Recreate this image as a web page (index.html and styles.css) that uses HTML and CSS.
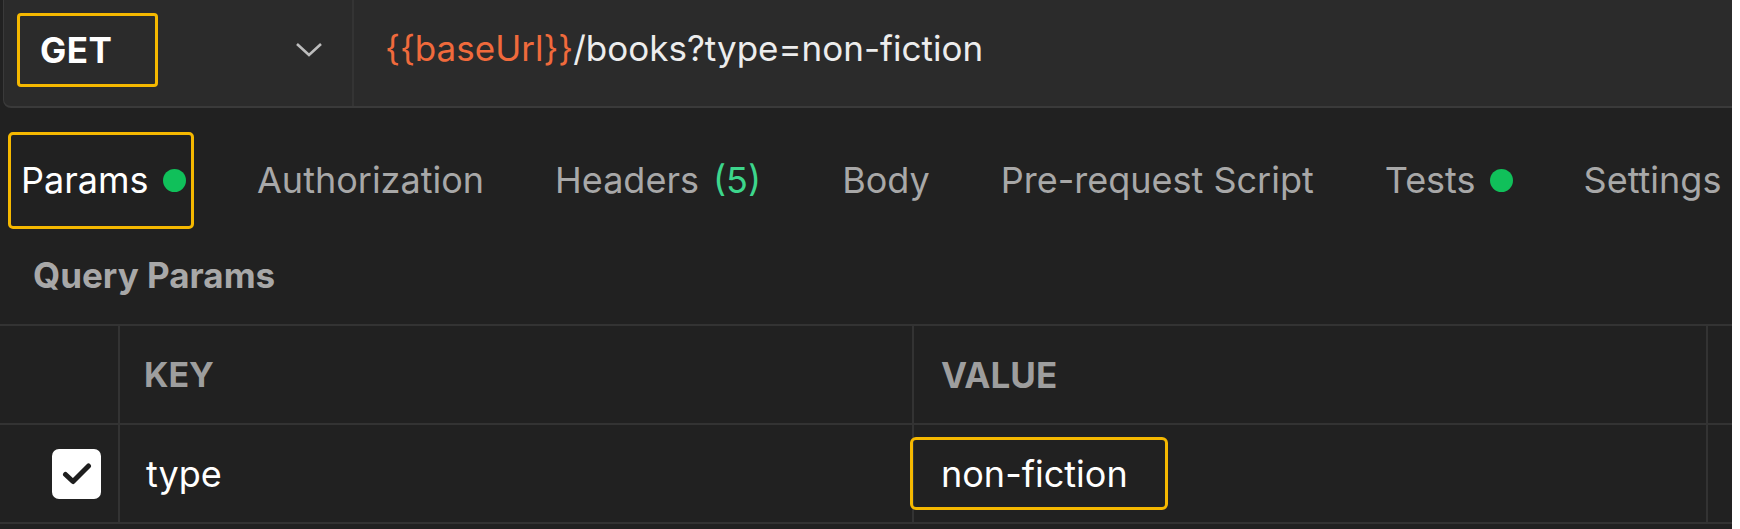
FILE: index.html
```html
<!DOCTYPE html>
<html>
<head>
<meta charset="utf-8">
<link rel="stylesheet" href="styles.css">
</head>
<body>
<div class="page">
  <div class="urlbar">
    <div class="method">
      <div class="method-box"><span class="method-name">GET</span></div>
      <svg class="chevron" width="28" height="16" viewBox="0 0 28 16"><path d="M2 2 L14 13 L26 2" fill="none" stroke="#bdbdbd" stroke-width="2.6"/></svg>
    </div>
    <div class="url"><span class="var">{{baseUrl}}</span>/books?type=non-fiction</div>
  </div>

  <div class="tabs">
    <div class="tab tab-active"><span>Params</span><span class="dot"></span></div>
    <div class="tab">Authorization</div>
    <div class="tab"><span>Headers</span><span class="count">(5)</span></div>
    <div class="tab">Body</div>
    <div class="tab">Pre-request Script</div>
    <div class="tab"><span>Tests</span><span class="dot"></span></div>
    <div class="tab">Settings</div>
  </div>

  <div class="section-title">Query Params</div>

  <div class="table">
    <div class="cell cell-check"></div>
    <div class="cell cell-head">KEY</div>
    <div class="cell cell-head cell-head-value">VALUE</div>
    <div class="cell cell-end"></div>

    <div class="cell cell-check">
      <span class="checkbox"><svg width="30" height="24" viewBox="0 0 30 24"><path d="M3.5 12.5 L11 19.5 L26.5 4" fill="none" stroke="#1e1e1e" stroke-width="5" stroke-linecap="round" stroke-linejoin="round"/></svg></span>
    </div>
    <div class="cell cell-text">type</div>
    <div class="cell cell-value"><span class="value-box">non-fiction</span></div>
    <div class="cell cell-end"></div>
  </div>
</div>
</body>
</html>
```

FILE: styles.css
```css
html, body {
  margin: 0;
  padding: 0;
  background: #ffffff;
}

.page {
  width: 1732px;
  height: 529px;
  background: #212121;
  font-family: Inter, "Noto Sans", "Liberation Sans", sans-serif;
  overflow: hidden;
}

.urlbar {
  height: 106px;
  margin: 0 0 0 3px;
  display: flex;
  align-items: stretch;
  background: #2b2b2b;
  border-bottom: 2px solid #3a3a3a;
  border-left: 1px solid #3a3a3a;
  border-radius: 0 0 0 8px;
}

.method {
  width: 350px;
  flex: none;
  display: flex;
  align-items: center;
  padding: 0 0 6px 13px;
  box-sizing: border-box;
  border-right: 2px solid #343434;
}

.method-box {
  width: 141px;
  height: 74px;
  box-sizing: border-box;
  border: 3px solid #f5b800;
  border-radius: 4px;
  display: flex;
  align-items: center;
  padding-left: 20px;
}

.method-name {
  color: #ffffff;
  font-weight: 700;
  font-size: 35px;
  letter-spacing: 0.5px;
}

.chevron {
  margin-left: 137px;
}

.url {
  display: flex;
  align-items: center;
  padding: 0 0 10px 31px;
  font-size: 35px;
  color: #ededed;
}

.var {
  color: #f06a3c;
}

.tabs {
  height: 140px;
  box-sizing: border-box;
  padding: 4px 0 0 8px;
  display: flex;
  align-items: center;
  gap: 71px;
}

.tab {
  font-size: 36px;
  color: #a8a8a8;
  display: flex;
  align-items: center;
  gap: 14px;
}

.tab-active {
  color: #ffffff;
  height: 97px;
  width: 186px;
  box-sizing: border-box;
  border: 3px solid #f5b800;
  border-radius: 5px;
  padding-left: 10px;
  margin-right: -8px;
}

.dot {
  width: 23px;
  height: 23px;
  border-radius: 50%;
  background: #10c05a;
}

.count {
  color: #3dd68c;
  margin-right: 10px;
}

.section-title {
  height: 76px;
  box-sizing: border-box;
  padding: 6px 0 0 33px;
  font-size: 35px;
  line-height: 42px;
  font-weight: 700;
  color: #a8a8a8;
}

.table {
  display: grid;
  grid-template-columns: 120px 794px 794px 1fr;
  grid-template-rows: 99px 99px;
  border-top: 2px solid #333333;
}

.cell {
  border-bottom: 2px solid #333333;
  border-right: 2px solid #333333;
  display: flex;
  align-items: center;
}

.cell-end {
  border-right: none;
}

.cell-head {
  padding-left: 24px;
  font-size: 34px;
  font-weight: 700;
  color: #9e9e9e;
}

.cell-head-value {
  padding-left: 27px;
  font-size: 35px;
}

.cell-check {
  padding-left: 52px;
}

.checkbox {
  width: 49px;
  height: 50px;
  box-sizing: border-box;
  background: #ffffff;
  border-radius: 7px;
  display: flex;
  align-items: center;
  justify-content: center;
}

.cell-text {
  padding-left: 26px;
  font-size: 36px;
  color: #ffffff;
}

.value-box {
  margin-left: -4px;
  width: 258px;
  height: 73px;
  box-sizing: border-box;
  border: 3px solid #f5b800;
  border-radius: 6px;
  display: flex;
  align-items: center;
  padding-left: 28px;
  font-size: 36px;
  color: #ffffff;
}
```
